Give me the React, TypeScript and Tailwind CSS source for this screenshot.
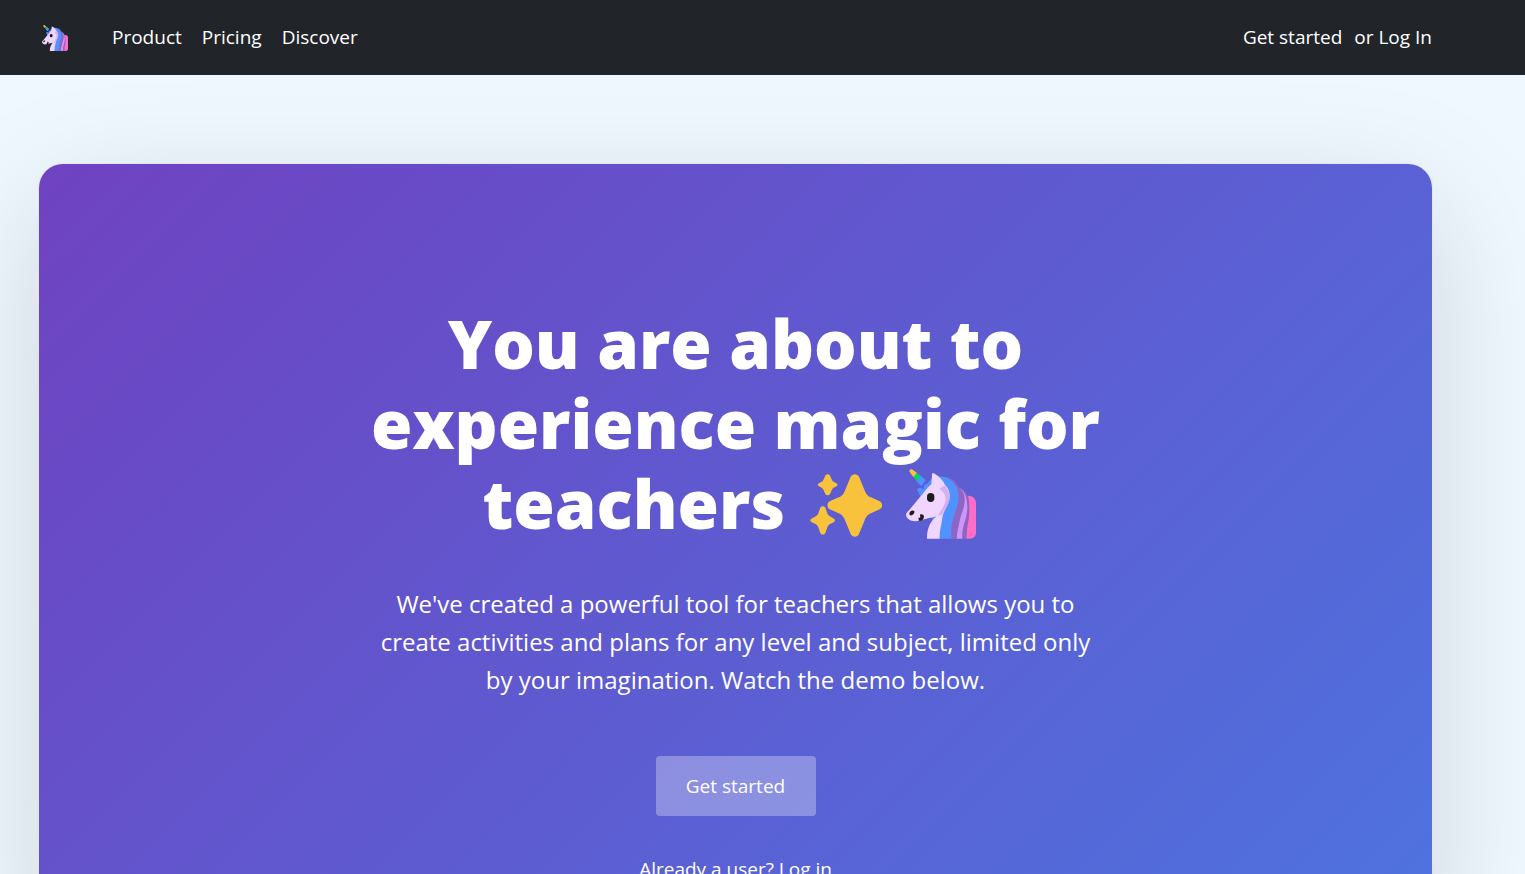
import React from 'react';

interface IconProps {
  className?: string;
}

const UnicornIcon: React.FC<IconProps> = ({ className }) => (
  <svg viewBox="12 10 210 210" className={className} aria-hidden="true">
    <path d="M150 62C178 62 190 76 196 90C212 90 222 98 222 112V200C222 212 214 219 202 219H150L140 120Z" fill="#8d65c5" />
    <path d="M198 90C212 90 222 98 222 114V200C222 212 214 219 202 219H194C192 186 204 158 202 132C202 116 201 102 198 90Z" fill="#ff6dc6" />
    <path d="M172 66C184 76 189 88 188 106C187 130 176 146 172 170C169 188 164 204 164 219H181C178 184 196 158 196 126C196 100 190 78 172 66Z" fill="#cd95fa" />
    <path d="M45 72C50 63 60 68 66 70C64 60 68 54 76 54C92 30 124 26 146 42C168 58 174 86 168 114C164 138 152 160 150 184C149 198 149 208 151 219H110L96 170Z" fill="#5092ff" />
    <path d="M134 34C160 46 173 72 169 104C166 134 150 158 148 186C147 200 147 210 149 219H164C161 194 166 166 174 146C184 122 186 92 172 66C162 48 150 38 134 34Z" fill="#8d65c5" />
    <path d="M100 50C124 46 144 64 143 92C142 122 122 134 121 158C118 180 112 198 113 219H75C75 188 84 168 104 152L46 166C30 170 14 160 12 149C12 142 16 138 22 133L72 72C80 62 88 54 100 50Z" fill="#efd5ff" />
    <path d="M126 58C140 72 146 90 141 108C138 122 126 130 121 145L107 151L122 126C134 108 136 82 112 71Z" fill="#cda2e8" opacity=".75" />
    <path d="M90 26C90 22 94 22 98 24C112 32 124 44 129 58L110 70L88 57Z" fill="#efd5ff" />
    <path d="M22 16C22 11 28 9 32 12L45 22L35 35L25 22Z" fill="#f9c23c" />
    <path d="M54 29L71 43L58 62L43 46Z" fill="#5092ff" />
    <path d="M45 22L56 31L45 47L35 35Z" fill="#00d26a" />
    <rect x="75" y="82" width="22" height="27" rx="11" fill="#1c1c1c" />
    <path d="M22 145C22 136 31 132 37 136C39 143 31 151 24 149Z" fill="#1c1c1c" />
    <path d="M54 147C60 143 66 148 66 152C65 162 60 167 51 165L49 156H55Z" fill="#1c1c1c" />
  </svg>
);

const SparklesIcon: React.FC<IconProps> = ({ className }) => (
  <svg viewBox="45 38 216 189" className={className} aria-hidden="true" fill="#f9c23c">
    <path d="M167 46C172 36 187 36 192 46L208 85C213 98 218 104 228 108L254 120C264 126 264 138 254 144L228 156C218 160 213 166 208 179L192 218C187 229 172 229 167 218L151 179C146 166 141 160 131 156L104 144C95 138 95 126 104 120L131 108C141 104 146 98 151 85Z" />
    <path d="M91 43C94 37 102 37 105 43L110 54C112 59 114 61 119 63L124 66C129 68 129 73 124 75L119 78C114 80 112 83 110 87L105 98C102 103 94 103 91 98L86 87C84 83 82 80 77 78L72 75C67 73 67 68 72 66L77 63C82 61 84 59 86 54Z" />
    <path d="M76 139C79 133 88 133 91 139L97 156C99 161 102 164 107 166L117 172C121 174 121 180 117 182L107 187C102 189 99 193 97 198L91 215C88 221 79 221 76 215L70 198C68 193 65 189 60 187L49 182C45 180 45 174 49 172L60 166C65 164 68 161 70 156Z" />
  </svg>
);

const Navbar: React.FC = () => (
  <header className="bg-[#212529] text-white">
    <nav className="flex h-[75px] items-center justify-between pl-[42px] pr-[93px] text-[19px]">
      <div className="flex items-center gap-5">
        <a href="#" aria-label="Home" className="mr-6">
          <UnicornIcon className="h-[26px] w-[26px]" />
        </a>
        <a href="#product">Product</a>
        <a href="#pricing">Pricing</a>
        <a href="#discover">Discover</a>
      </div>
      <div className="flex items-center gap-3">
        <a href="#signup">Get started</a>
        <span>
          or <a href="#login">Log In</a>
        </span>
      </div>
    </nav>
  </header>
);

const Hero: React.FC = () => (
  <section className="flex flex-col items-center rounded-[24px] bg-[linear-gradient(135deg,#6f42c1,#4e73df)] px-6 pt-[139px] pb-8 text-center text-white shadow-[0_0_0_1px_#e0e5f0,0_40px_130px_rgba(0,0,0,0.15)]">
    <h1 className="max-w-[760px] text-[67px] leading-[80px] font-extrabold">
      You are about to experience magic for teachers{' '}
      <span className="whitespace-nowrap">
        <SparklesIcon className="mr-6 ml-2 inline-block h-[63px] w-[72px] align-[-8px]" />
        <UnicornIcon className="mr-3 inline-block h-[70px] w-[70px] align-[-10px]" />
      </span>
    </h1>
    <p className="mt-[42px] max-w-[720px] text-[24px] leading-[38px]">
      We've created a powerful tool for teachers that allows you to create activities and plans for any level and
      subject, limited only by your imagination. Watch the demo below.
    </p>
    <button type="button" className="mt-[57px] h-[60px] w-40 rounded-[4px] bg-white/30 text-[19px]">
      Get started
    </button>
    <p className="mt-[38px] text-[19px] leading-[30px]">
      Already a user? <a href="#login">Log in</a>
    </p>
  </section>
);

const App: React.FC = () => (
  <div className="min-h-screen bg-[#f0f8ff] font-['Open_Sans',sans-serif]">
    <Navbar />
    <main className="pt-[89px] pr-[93px] pl-[39px]">
      <Hero />
    </main>
  </div>
);

export default App;
